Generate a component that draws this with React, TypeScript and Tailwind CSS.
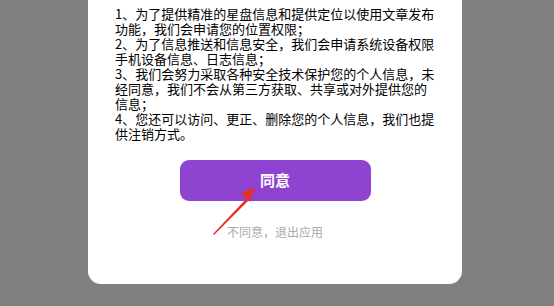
const items = [
  '1、为了提供精准的星盘信息和提供定位以使用文章发布功能，我们会申请您的位置权限；',
  '2、为了信息推送和信息安全，我们会申请系统设备权限手机设备信息、日志信息；',
  '3、我们会努力采取各种安全技术保护您的个人信息，未经同意，我们不会从第三方获取、共享或对外提供您的信息；',
  '4、您还可以访问、更正、删除您的个人信息，我们也提供注销方式。',
];

function Arrow() {
  return (
    <svg
      className="absolute left-[205px] top-[180px] pointer-events-none"
      width="60"
      height="60"
      viewBox="0 0 60 60"
    >
      <path d="M8 54 L41 19 L43 21 L9 55 Z" fill="#e5302a" />
      <path d="M50 7 L36 13 L45 22 Z" fill="#e5302a" />
    </svg>
  );
}

export default function App() {
  return (
    <div
      className="relative h-[306px] w-[554px] overflow-hidden bg-[#808080]"
      style={{ fontFamily: '"Noto Sans CJK SC", "Noto Sans", sans-serif' }}
    >
      <div className="ml-[88px] flex w-[374px] flex-col items-center rounded-b-[13px] bg-white pt-[6px] pb-[44px]">
        <div className="w-[320px] text-[13px] leading-[15px] text-black">
          {items.map((t) => (
            <p key={t}>{t}</p>
          ))}
        </div>
        <button className="mt-[19px] flex h-[41px] w-[191px] items-center justify-center rounded-[9px] bg-[#8e44d0] text-[15px] font-bold text-white">
          同意
        </button>
        <div className="mt-[23px] text-[12px] leading-[16px] text-[#aaaaaa]">不同意，退出应用</div>
      </div>
      <Arrow />
    </div>
  );
}
